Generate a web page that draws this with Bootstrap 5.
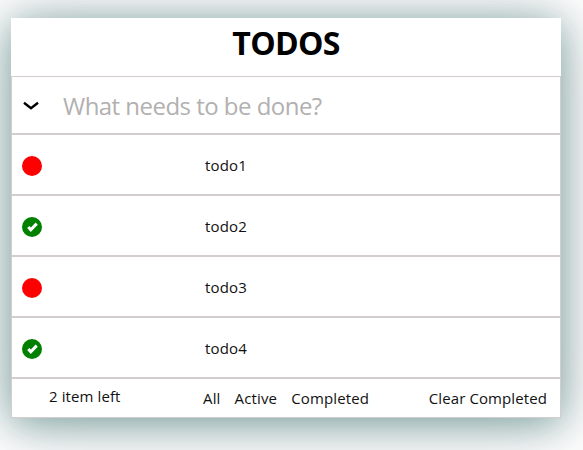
<!DOCTYPE html>
<html lang="en">
<head>
<meta charset="utf-8">
<meta name="viewport" content="width=device-width, initial-scale=1">
<title>Todos</title>
<link href="https://cdn.jsdelivr.net/npm/bootstrap@5.3.0/dist/css/bootstrap.min.css" rel="stylesheet">
<style>
body{font-family:"Segoe UI","Open Sans","Noto Sans",sans-serif;color:#111;background:#fff;overflow:hidden;font-size:15px;line-height:20px;height:450px;padding:18px 0 0 11px}
.todo-app{width:550px;height:400px;box-shadow:0 5px 36px rgba(20,105,92,.46),0 5px 66px rgba(50,50,70,.28)}
.app-title{height:58px;font-size:32px;font-weight:700;line-height:50px;color:#000;letter-spacing:-.7px}
.line-box{border:1px solid #d3cdcf}
.entry{height:58px;padding:2px 0 0 11px}
.entry input{font-size:24px;line-height:32px;width:400px;margin-left:24px;letter-spacing:-.53px;background:none;outline:0}
.entry input::placeholder{color:#b2b0b0;opacity:1}
.todo-row{height:61px;padding-left:10px}
.todo-name{margin-left:163px;letter-spacing:.15px}
.foot{height:40px;padding:0 13px 0 37px}
.remaining{width:154px;letter-spacing:.1px}
.filters{gap:14px;letter-spacing:.15px}
.dot{width:20px;height:20px;margin-top:2px}
.clear{letter-spacing:.1px}
</style>
<script src="https://cdn.jsdelivr.net/npm/bootstrap@5.3.0/dist/js/bootstrap.bundle.min.js"></script>
</head>
<body>
<main class="todo-app bg-white">
<h1 class="app-title text-center m-0">TODOS</h1>
<div class="entry line-box d-flex align-items-center">
<svg width="16" height="10" viewBox="0 0 16 10"><path d="M1 1.8l7 5.5 7-5.5" fill="none" stroke="#000" stroke-width="2.4"/></svg>
<input class="border-0 p-0" placeholder="What needs to be done?" aria-label="New todo">
</div>
<ul class="list-unstyled m-0">
<li class="todo-row line-box d-flex align-items-center"><svg class="dot" viewBox="0 0 20 20"><circle cx="10" cy="10" r="10" fill="red"/></svg><span class="todo-name">todo1</span></li>
<li class="todo-row line-box d-flex align-items-center"><svg class="dot" viewBox="0 0 20 20"><circle cx="10" cy="10" r="10" fill="green"/><path d="M6.3 10l2.5 2.8L14.7 6.6" fill="none" stroke="#fff" stroke-width="3"/></svg><span class="todo-name">todo2</span></li>
<li class="todo-row line-box d-flex align-items-center"><svg class="dot" viewBox="0 0 20 20"><circle cx="10" cy="10" r="10" fill="red"/></svg><span class="todo-name">todo3</span></li>
<li class="todo-row line-box d-flex align-items-center"><svg class="dot" viewBox="0 0 20 20"><circle cx="10" cy="10" r="10" fill="green"/><path d="M6.3 10l2.5 2.8L14.7 6.6" fill="none" stroke="#fff" stroke-width="3"/></svg><span class="todo-name">todo4</span></li>
</ul>
<footer class="foot line-box d-flex align-items-center">
<span class="remaining pb-1">2 item left</span>
<span class="filters d-flex"><span>All</span><span>Active</span><span>Completed</span></span>
<span class="clear ms-auto">Clear Completed</span>
</footer>
</main>
</body>
</html>
